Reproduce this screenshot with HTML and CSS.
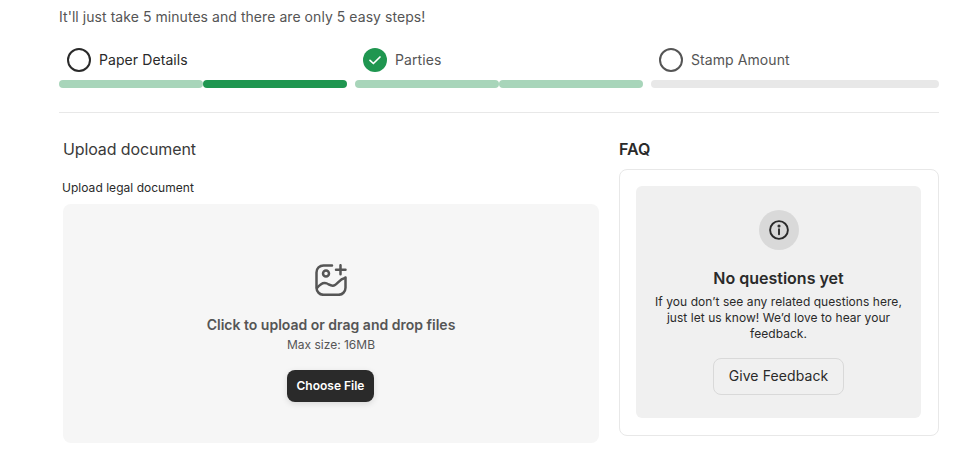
FILE: index.html
```html
<!DOCTYPE html>
<html lang="en">
<head>
<meta charset="utf-8">
<title>Upload document</title>
<link rel="stylesheet" href="styles.css">
</head>
<body>
<main class="page">
  <p class="intro">It'll just take 5 minutes and there are only 5 easy steps!</p>
  <ol class="steps">
    <li class="step">
      <div class="step-head">
        <span class="ring ring-dark"></span>
        <span class="step-label step-label-dark">Paper Details</span>
      </div>
      <div class="bars"><span class="bar bar-light"></span><span class="bar bar-full"></span></div>
    </li>
    <li class="step">
      <div class="step-head">
        <svg class="check" viewBox="0 0 24 24" width="24" height="24" aria-hidden="true">
          <circle cx="12" cy="12" r="12" fill="#1f9650"/>
          <path d="M7 12.3l3.4 3.2L17 9" fill="none" stroke="#fff" stroke-width="1.7" stroke-linecap="round" stroke-linejoin="round"/>
        </svg>
        <span class="step-label">Parties</span>
      </div>
      <div class="bars"><span class="bar bar-light"></span><span class="bar bar-light"></span></div>
    </li>
    <li class="step">
      <div class="step-head">
        <span class="ring ring-grey"></span>
        <span class="step-label">Stamp Amount</span>
      </div>
      <div class="bars bars-joined"><span class="bar bar-empty"></span></div>
    </li>
  </ol>
  <hr class="rule">
  <div class="columns">
    <section class="upload">
      <h2 class="upload-title">Upload document</h2>
      <label class="field-label">Upload legal document</label>
      <div class="dropzone">
        <svg class="image-add" viewBox="0 0 32 32" width="32" height="32" fill="none" stroke="#555" stroke-width="2.5" stroke-linecap="round" stroke-linejoin="round" aria-hidden="true">
          <path d="M17 1.4H8.5A7 7 0 0 0 1.5 8.4v15.4a7 7 0 0 0 7 7h15a7 7 0 0 0 7-7V13.5"/>
          <circle cx="11" cy="9.5" r="3"/>
          <path d="M25.5 1.2v9M21 5.7h9.5"/>
          <path d="M2 24c3.5-4.5 7-6 10-4.5s5 3.5 8 1.5 5-6 10-7"/>
        </svg>
        <p class="drop-title">Click to upload or drag and drop files</p>
        <p class="drop-size">Max size: 16MB</p>
        <button class="choose" type="button">Choose File</button>
      </div>
    </section>
    <aside class="faq">
      <h2 class="faq-title">FAQ</h2>
      <div class="faq-card">
        <div class="faq-empty">
          <span class="info-disc">
            <svg viewBox="0 0 20 20" width="20" height="20" fill="none" stroke="#2a2a2a" stroke-width="1.9" stroke-linecap="round" aria-hidden="true">
              <circle cx="10" cy="10" r="8.9"/>
              <path d="M10 9.2v5"/>
              <circle cx="10" cy="6" r=".6" fill="#2a2a2a"/>
            </svg>
          </span>
          <h3 class="empty-title">No questions yet</h3>
          <p class="empty-text">If you don’t see any related questions here, just let us know! We’d love to hear your feedback.</p>
          <button class="feedback" type="button">Give Feedback</button>
        </div>
      </div>
    </aside>
  </div>
</main>
</body>
</html>
```

FILE: styles.css
```css
* { box-sizing: border-box; }
html, body { margin: 0; padding: 0; background: #fff; overflow: hidden; }
body { font-family: Inter, "Liberation Sans", sans-serif; color: #2a2a2a; }
.page { padding: 8px 23px 0 59px; width: 962px; }
.intro { margin: 0; font-size: 14px; line-height: 17px; color: #555; letter-spacing: .055px; }
.steps { list-style: none; margin: 23px 0 0; padding: 0; display: grid; grid-template-columns: repeat(3, 1fr); gap: 8px; }
.step-head { display: flex; align-items: center; gap: 8px; padding-left: 8px; height: 24px; }
.step-label { font-size: 14px; line-height: 20px; color: #555; letter-spacing: .08px; }
.step-label-dark { color: #2a2a2a; }
.ring { width: 24px; height: 24px; border-radius: 50%; border: 2px solid #555; background: #fff; flex: none; }
.ring-dark { border-color: #2a2a2a; }
.check { flex: none; display: block; }
.bars { display: flex; margin-top: 8px; height: 8px; }
.bar { flex: 1; height: 8px; border-radius: 4px; }
.bar-light { background: #a8d5ba; }
.bar-full { background: #1f9650; }
.bar-empty { background: #e8e8e8; }
.rule { margin: 24px 0 0; border: 0; border-top: 1px solid #e8e8e8; height: 0; }
.columns { display: grid; grid-template-columns: 540px 320px; column-gap: 20px; margin-top: 26px; }
.upload-title { margin: 0 0 0 4px; font-size: 16px; line-height: 20px; font-weight: 400; color: #3a3a3a; letter-spacing: -.12px; }
.field-label { display: block; margin: 21px 0 0 3px; font-size: 12px; line-height: 16px; font-weight: 400; color: #2a2a2a; letter-spacing: .03px; }
.dropzone { margin: 8px 0 0 4px; height: 239px; width: 536px; background: #f6f6f6; border-radius: 8px; display: flex; flex-direction: column; align-items: center; padding-top: 60px; }
.image-add { display: block; }
.drop-title { margin: 19px 0 0; font-size: 14px; line-height: 20px; font-weight: 600; color: #555; }
.drop-size { margin: 2px 0 0; font-size: 12px; line-height: 16px; color: #555; }
.choose { margin: 17px 1px 0 0; width: 87px; height: 32px; padding: 0; border: 0; border-radius: 8px; background: #2a2a2a; color: #fff; font: 600 12px/16px Inter, "Liberation Sans", sans-serif; box-shadow: 0 2px 6px rgba(0,0,0,.12); }
.faq-title { margin: 0; font-size: 16px; line-height: 20px; font-weight: 600; color: #2a2a2a; }
.faq-card { margin-top: 10px; height: 267px; border: 1px solid #e8e8e8; border-radius: 8px; padding: 16px 17px 17px 16px; }
.faq-empty { height: 232px; background: #f0f0f0; border-radius: 6px; display: flex; flex-direction: column; align-items: center; padding: 24px 16px 0; }
.info-disc { width: 40px; height: 40px; border-radius: 50%; background: #d9d9d9; display: flex; align-items: center; justify-content: center; }
.empty-title { margin: 18px 0 0; font-size: 16px; line-height: 20px; font-weight: 600; color: #2a2a2a; }
.empty-text { margin: 6px 0 0; font-size: 12px; line-height: 16px; text-align: center; color: #2a2a2a; letter-spacing: .05px; }
.feedback { margin-top: 16px; width: 131px; height: 37px; padding: 0 0 1px; background: transparent; border: 1px solid #d9d9d9; border-radius: 8px; color: #2a2a2a; font: 400 14px/20px Inter, "Liberation Sans", sans-serif; letter-spacing: .1px; }
```
